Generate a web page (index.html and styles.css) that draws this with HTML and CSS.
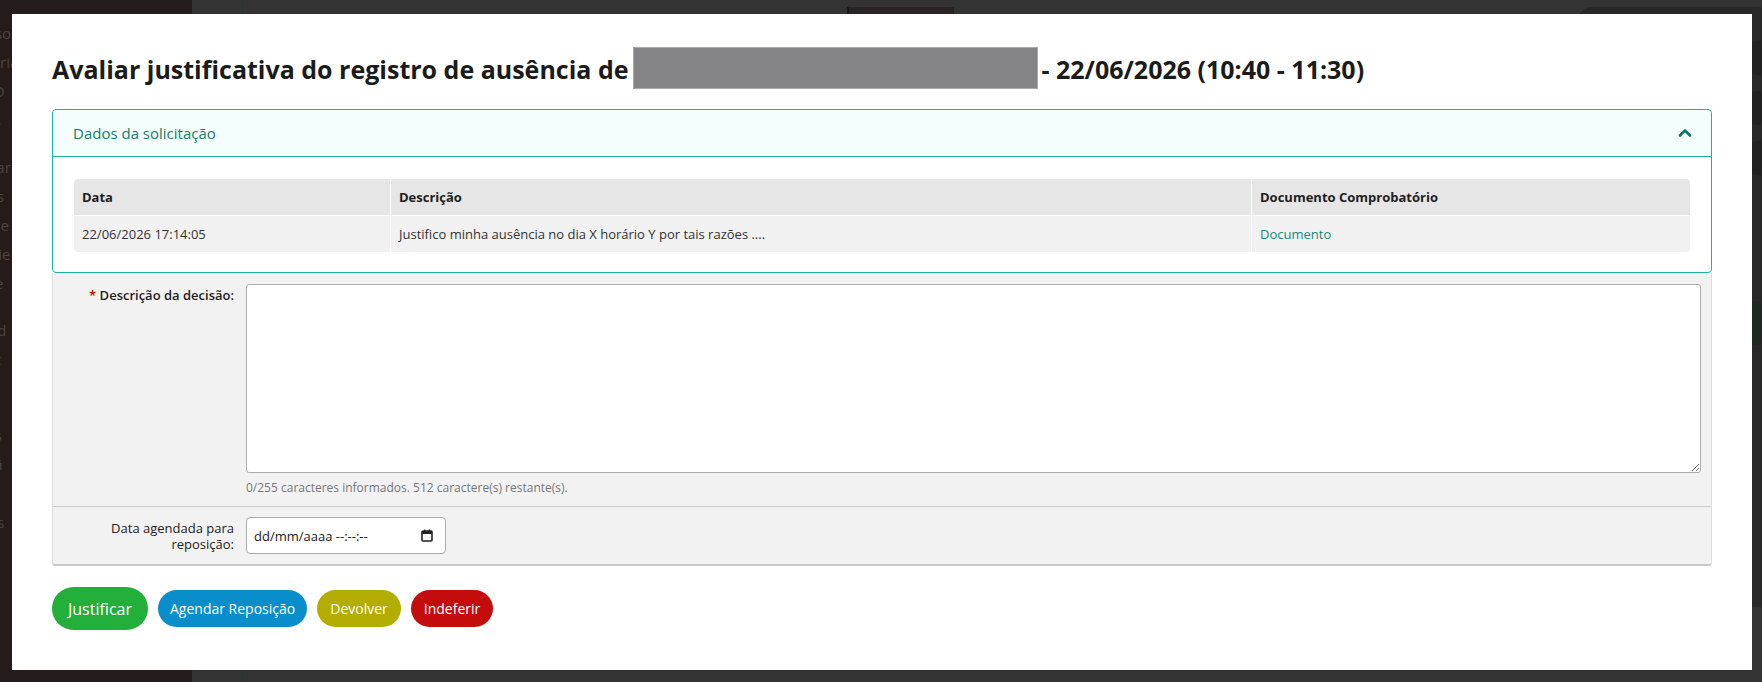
FILE: index.html
```html
<!DOCTYPE html>
<html lang="pt-BR">
<head>
  <meta charset="UTF-8">
  <meta name="viewport" content="width=device-width, initial-scale=1.0">
  <title>Avaliar justificativa</title>
  <link rel="stylesheet" href="styles.css">
</head>
<body>
  <div class="page">
    <aside class="sidebar">
      <ul class="nav">
        <li>Avisos</li>
        <li>Processos e</li>
        <li>Secretaria</li>
        <li>Diário D</li>
        <li>Turmas</li>
        <li class="gap">Calendar</li>
        <li>Eleições</li>
        <li>Plano de</li>
        <li>Relatórie</li>
        <li>Reserve</li>
        <li class="gap">Chamad</li>
        <li>Contrat</li>
        <li class="gap">Projeto</li>
        <li>Pesquis</li>
        <li>Extensã</li>
        <li>Estágio</li>
        <li>Adminis</li>
        <li>Comun</li>
      </ul>
    </aside>
    <main class="main">
      <div class="tab"></div>
      <div class="side-card">
        <span class="dot"></span>
        <span class="dot"></span>
        <span class="dot"></span>
        <span class="dot green"></span>
      </div>
    </main>
  </div>

  <div class="modal">
    <h1 class="modal-title">
      Avaliar justificativa do registro de ausência de
      <span class="redacted"></span>
      - 22/06/2026 (10:40 - 11:30)
    </h1>

    <section class="panel">
      <header class="panel-head">
        <span>Dados da solicitação</span>
        <svg class="chevron" width="14" height="9" viewBox="0 0 14 9">
          <path d="M2 7.5 L7 2.5 L12 7.5" fill="none" stroke="#0f7463" stroke-width="2.6" stroke-linecap="round" stroke-linejoin="round"/>
        </svg>
      </header>
      <div class="panel-body">
        <table class="grid">
          <thead>
            <tr>
              <th class="col-date">Data</th>
              <th class="col-desc">Descrição</th>
              <th>Documento Comprobatório</th>
            </tr>
          </thead>
          <tbody>
            <tr>
              <td>22/06/2026 17:14:05</td>
              <td>Justifico minha ausência no dia X horário Y por tais razões ....</td>
              <td><a href="#" class="link">Documento</a></td>
            </tr>
          </tbody>
        </table>
      </div>
    </section>

    <div class="form">
      <div class="form-row first">
        <label class="form-label" for="decisao"><span class="req">*</span> <b>Descrição da decisão:</b></label>
        <div class="form-field">
          <textarea id="decisao" class="textarea"></textarea>
          <div class="hint">0/255 caracteres informados. 512 caractere(s) restante(s).</div>
        </div>
      </div>
      <div class="form-row second">
        <label class="form-label">Data agendada para reposição:</label>
        <div class="form-field">
          <div class="date-input">
            <span>dd/mm/aaaa --:--:--</span>
            <svg width="12" height="13" viewBox="0 0 12 13">
              <rect x="1" y="2" width="10" height="10" rx="1" fill="none" stroke="#222" stroke-width="1.6"/>
              <rect x="1" y="2" width="10" height="3" fill="#222"/>
              <rect x="3" y="0.5" width="1.4" height="2.5" fill="#222"/>
              <rect x="7.6" y="0.5" width="1.4" height="2.5" fill="#222"/>
            </svg>
          </div>
        </div>
      </div>
    </div>

    <div class="actions">
      <button class="btn btn-main">Justificar</button>
      <button class="btn btn-blue">Agendar Reposição</button>
      <button class="btn btn-olive">Devolver</button>
      <button class="btn btn-red">Indeferir</button>
    </div>
  </div>
</body>
</html>
```

FILE: styles.css
```css
* {
  box-sizing: border-box;
}
html, body {
  margin: 0;
  height: 100%;
  overflow: hidden;
}
body {
  font-family: "Open Sans", "Liberation Sans", sans-serif;
  background: #333333;
  color: #222;
}

/* page behind the dialog */
.page {
  display: flex;
  height: 100%;
}
.sidebar {
  width: 192px;
  background: #231c1b;
  overflow: hidden;
}
.nav {
  list-style: none;
  margin: -10px 0 0 0;
  padding: 0;
}
.nav li {
  white-space: nowrap;
  color: #4d4341;
  font-size: 15px;
  line-height: 29px;
  text-indent: -52px;
}
.nav li.gap {
  margin-top: 18px;
}
.main {
  flex: 1;
  display: flex;
  align-items: flex-start;
  padding-top: 7px;
  border-left: 50px solid #333;
  box-shadow: inset 1px 0 0 #2d3331;
}
.tab {
  width: 107px;
  height: 20px;
  margin-left: 605px;
  background: #2a2424;
  border-left: 2px solid #1e1a1a;
}
.side-card {
  margin-left: auto;
  width: 184px;
  height: 600px;
  background: #282828;
  border-radius: 14px 0 0 14px;
  display: flex;
  flex-direction: column;
  align-items: flex-end;
  gap: 16px;
  padding: 34px 0 0;
}
.dot {
  width: 34px;
  height: 34px;
  border-radius: 50%;
  background: #222;
  margin-right: -14px;
}
.dot.green {
  margin-top: 110px;
  width: 44px;
  height: 44px;
  background: #1f2a1f;
}

/* dialog */
.modal {
  position: fixed;
  left: 12px;
  top: 14px;
  width: 1740px;
  background: #fff;
  padding: 0 40px 40px;
}
.modal-title {
  display: flex;
  align-items: center;
  height: 42px;
  margin: 33px 0 20px;
  padding-top: 2px;
  font-size: 25px;
  font-weight: 700;
  color: #1b1b1b;
  white-space: nowrap;
}
.redacted {
  flex: 0 0 405px;
  height: 42px;
  margin: -2px 3px 0 5px;
  background: #848487;
  border: 1px solid #a9a9ab;
}

.panel {
  border: 1px solid #1db39b;
  border-radius: 4px;
}
.panel-head {
  display: flex;
  align-items: center;
  justify-content: space-between;
  height: 47px;
  padding: 0 19px 0 20px;
  background: #f4fffd;
  border-bottom: 1px solid #1db39b;
  border-radius: 4px 4px 0 0;
  color: #187a6c;
  font-size: 15px;
}
.chevron {
  margin-top: -2px;
}
.panel-body {
  padding: 22px 21px 20px;
}

.grid {
  width: 100%;
  border-collapse: separate;
  border-spacing: 0;
  border-radius: 4px;
  overflow: hidden;
  font-size: 13px;
  text-align: left;
}
.grid th {
  height: 37px;
  padding: 0 8px;
  background: #e6e6e6;
  font-weight: 700;
  color: #1e1e1e;
  border-bottom: 1px solid #fff;
}
.grid td {
  height: 36px;
  padding: 0 8px;
  background: #f1f1f1;
  color: #333;
}
.grid th + th,
.grid td + td {
  border-left: 1px solid #fff;
}
.grid .col-date {
  width: 316px;
}
.grid .col-desc {
  width: 861px;
}
.link {
  color: #17897a;
  text-decoration: none;
}

/* decision form */
.form {
  background: #f2f2f2;
  border: 1px solid #dedede;
  border-top: none;
  border-bottom: 2px solid #c8c8c8;
  border-radius: 0 0 3px 3px;
}
.form-row {
  display: flex;
  gap: 12px;
  padding: 11px 10px 10px 31px;
}
.form-row.first {
  border-bottom: 1px solid #cccccc;
}
.form-row.second {
  align-items: center;
  padding-top: 10px;
  padding-bottom: 10px;
}
.form-label {
  flex: 0 0 150px;
  text-align: right;
  font-size: 13px;
  line-height: 16px;
  color: #222;
}
.first .form-label {
  padding-top: 3px;
}
.form-label b {
  font-weight: 600;
}
.req {
  color: #c40000;
  font-weight: 600;
}
.form-field {
  flex: 1;
}
.textarea {
  display: block;
  width: 100%;
  height: 189px;
  border: 1px solid #ababab;
  border-radius: 3px;
  background: #fff;
  font-family: inherit;
  font-size: 13px;
}
.hint {
  margin-top: 7px;
  font-size: 12px;
  line-height: 16px;
  color: #777;
}
.date-input {
  display: flex;
  align-items: center;
  justify-content: space-between;
  width: 200px;
  height: 37px;
  padding: 0 12px 0 7px;
  background: #fff;
  border: 1px solid #ababab;
  border-radius: 4px;
  font-size: 13px;
  color: #1a1a1a;
}

/* buttons */
.actions {
  display: flex;
  align-items: center;
  gap: 10px;
  margin-top: 21px;
}
.btn {
  border: none;
  color: #fff;
  font-family: inherit;
  font-size: 14px;
  height: 37px;
  padding: 0 13px;
  border-radius: 19px;
  cursor: pointer;
}
.btn-main {
  height: 43px;
  padding: 0 16px;
  border-radius: 22px;
  font-size: 16px;
  background: #22b03a;
}
.btn-blue {
  padding: 0 12px;
  background: #0a8ecb;
}
.btn-olive {
  background: #b3ad00;
}
.btn-red {
  background: #c40c0d;
}
```
